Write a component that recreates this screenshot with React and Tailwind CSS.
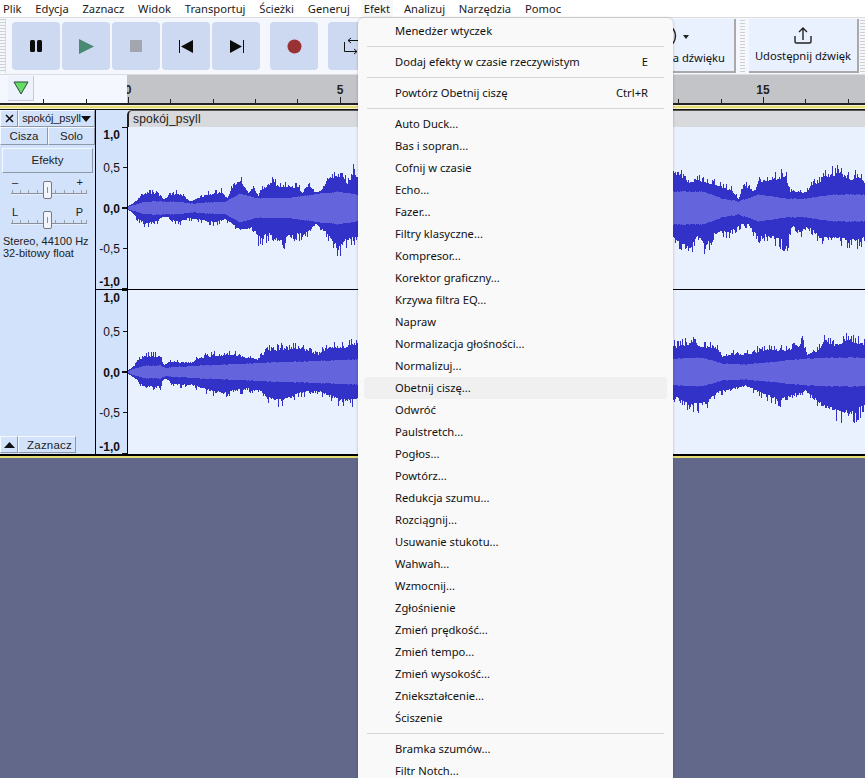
import { useMemo } from 'react';

const menuBar = ['Plik', 'Edycja', 'Zaznacz', 'Widok', 'Transportuj', 'Ścieżki', 'Generuj', 'Efekt', 'Analizuj', 'Narzędzia', 'Pomoc'];

const effects = [
  'Auto Duck...', 'Bas i sopran...', 'Cofnij w czasie', 'Echo...', 'Fazer...', 'Filtry klasyczne...', 'Kompresor...',
  'Korektor graficzny...', 'Krzywa filtra EQ...', 'Napraw', 'Normalizacja głośności...', 'Normalizuj...', 'Obetnij ciszę...',
  'Odwróć', 'Paulstretch...', 'Pogłos...', 'Powtórz...', 'Redukcja szumu...', 'Rozciągnij...', 'Usuwanie stukotu...',
  'Wahwah...', 'Wzmocnij...', 'Zgłośnienie', 'Zmień prędkość...', 'Zmień tempo...', 'Zmień wysokość...', 'Zniekształcenie...', 'Ściszenie',
];

// envelopes: [page x, amplitude in px], read off the reference
const channels = [
  {
    height: 162,
    center: 81,
    seed: 7,
    top: [[128, 1], [138, 11], [145, 18], [155, 18], [160, 13], [163, 8], [168, 15], [177, 18], [187, 11], [190, 6], [205, 16], [222, 20], [227, 10], [232, 25], [240, 33], [248, 16], [253, 25], [258, 13], [262, 23], [272, 30], [280, 26], [298, 25], [302, 16], [308, 28], [317, 13], [322, 21], [328, 35], [342, 40], [347, 28], [353, 43], [357, 30], [674, 40], [678, 43], [688, 28], [695, 33], [715, 28], [732, 21], [738, 10], [744, 28], [755, 18], [758, 31], [775, 36], [785, 41], [790, 20], [805, 17], [812, 28], [828, 40], [838, 43], [852, 35], [858, 40], [865, 28]],
    bottom: [[128, 1], [138, 14], [145, 20], [158, 15], [163, 7], [178, 18], [188, 12], [215, 18], [225, 13], [240, 25], [252, 23], [258, 37], [272, 32], [282, 42], [292, 32], [305, 32], [315, 17], [325, 27], [338, 50], [345, 40], [357, 35], [674, 35], [688, 50], [698, 32], [705, 49], [715, 29], [728, 30], [742, 20], [748, 19], [757, 35], [765, 32], [775, 37], [787, 44], [792, 19], [800, 30], [808, 22], [820, 37], [838, 37], [860, 41], [865, 35]],
    rms: [[128, 1], [145, 6], [175, 6], [190, 4], [225, 6], [240, 14], [258, 9], [290, 10], [338, 16], [357, 13], [674, 16], [702, 16], [722, 9], [738, 6], [758, 13], [788, 9], [805, 9], [832, 13], [865, 13]],
  },
  {
    height: 164,
    center: 82,
    seed: 23,
    top: [[128, 1], [133, 6], [137, 14], [143, 19], [160, 19], [163, 7], [170, 13], [190, 10], [200, 18], [213, 20], [230, 22], [257, 14], [268, 27], [300, 29], [317, 20], [328, 30], [345, 30], [353, 35], [357, 30], [674, 32], [675, 30], [692, 35], [698, 30], [715, 30], [722, 19], [732, 22], [745, 22], [765, 27], [772, 28], [788, 25], [802, 35], [807, 19], [818, 25], [825, 39], [835, 30], [847, 40], [865, 32]],
    bottom: [[128, 1], [133, 5], [143, 18], [160, 18], [163, 6], [173, 15], [193, 16], [213, 25], [227, 25], [247, 20], [260, 23], [270, 33], [283, 35], [300, 25], [317, 22], [337, 33], [353, 35], [357, 33], [674, 33], [675, 30], [688, 40], [698, 40], [708, 36], [715, 25], [732, 21], [745, 16], [765, 28], [778, 35], [805, 21], [822, 41], [840, 50], [853, 51], [865, 41]],
    rms: [[128, 1], [143, 6], [160, 6], [165, 4], [200, 6], [267, 9], [353, 12], [674, 13], [675, 13], [702, 14], [722, 8], [745, 7], [805, 13], [832, 14], [865, 14]],
  },
];

function sample(points, x) {
  for (let i = 1; i < points.length; i++) {
    if (x <= points[i][0]) {
      const [x0, y0] = points[i - 1];
      const [x1, y1] = points[i];
      return y0 + ((y1 - y0) * (x - x0)) / (x1 - x0 || 1);
    }
  }
  return points[points.length - 1][1];
}

function Waveform({ channel }) {
  const { height, center, seed, top, bottom, rms } = channel;
  const paths = useMemo(() => {
    let s = seed * 9973;
    const rand = () => {
      s = (s * 16807) % 2147483647;
      return s / 2147483647;
    };
    const peak = (r, p) => {
      const roll = rand();
      const v = roll < 0.2 ? 0.95 + rand() * 0.1 : 0.66 + 0.3 * rand() * rand();
      return Math.max(r + Math.min(3, r), r + (p - r) * v);
    };
    let dark = '';
    let light = '';
    for (let x = 128; x < 865; x++) {
      const r = sample(rms, x);
      const t = peak(r, sample(top, x));
      const b = peak(r, sample(bottom, x));
      const px = x - 128 + 0.5;
      dark += `M${px} ${Math.round(center - t)}V${Math.round(center + b)}`;
      const j = r + rand() * 0.8;
      light += `M${px} ${Math.round(center - j)}V${Math.round(center + j)}`;
    }
    return { dark, light };
  }, [seed, center, top, bottom, rms]);
  return (
    <svg width="737" height={height} className="block" shapeRendering="crispEdges">
      <path d={paths.dark} stroke="#3232c8" fill="none" />
      <path d={paths.light} stroke="#6464dc" fill="none" />
    </svg>
  );
}

function AmpRuler({ height, marks }) {
  return (
    <svg width="31" height={height} className="block shrink-0" fontFamily="'Liberation Sans', Arial, sans-serif" fontSize="12" fill="#111">
      {marks.map(([y, label, bold, ty]) => (
        <g key={label + y}>
          <text x="24" y={ty} textAnchor="end" fontWeight={bold ? 700 : 400}>{label}</text>
          <rect x={bold ? 26 : 27} y={y} width={bold ? 5 : 4} height={bold && label === '0,0' ? 2 : 1} fill="#111" />
        </g>
      ))}
    </svg>
  );
}

function TransportButton({ children }) {
  return <div className="w-12 h-12 shrink-0 rounded-[4px] bg-[#cdd9f0] flex items-center justify-center">{children}</div>;
}

function Grip({ className = '' }) {
  return <div className={`bg-[repeating-linear-gradient(to_bottom,#cfcfcf_0,#cfcfcf_1px,transparent_1px,transparent_3px)] ${className}`} />;
}

function TrackButton({ className = '', children }) {
  return (
    <div className={`flex items-center justify-center bg-[#d3e2fb] border border-t-[#f4f8ff] border-l-[#f4f8ff] border-r-[#8f98a8] border-b-[#8f98a8] ${className}`}>
      {children}
    </div>
  );
}

function Slider({ left, right }) {
  return (
    <div className="relative h-[30px] mx-[11px]">
      <div className="flex justify-between h-[12px] leading-[12px] text-[11px] text-[#222] px-[1px]">
        <span>{left}</span>
        <span>{right}</span>
      </div>
      <svg width="76" height="8" className="block mt-[1px]" shapeRendering="crispEdges">
        {[1, 9, 17, 26, 35, 44, 53, 62, 70, 75].map((x) => (
          <rect key={x} x={x} y="1" width="1" height="3" fill="#9aa0aa" />
        ))}
        <rect x="0" y="4" width="76" height="1" fill="#8b8f98" />
        <rect x="0" y="5" width="76" height="1" fill="#e8eefb" />
      </svg>
      <div className="absolute left-[32px] top-[5px] w-[9px] h-[18px] rounded-[2px] bg-[#f2f5fb] border border-[#77797f] flex items-center justify-center">
        <div className="w-[1.5px] h-[6px] bg-[#8a8f99]" />
      </div>
    </div>
  );
}

function MenuRow({ label, shortcut, active }) {
  return (
    <div className={`h-[22px] mx-[6px] pl-[31px] pr-[19px] flex items-center justify-between rounded-[4px] ${active ? 'bg-[#f0f0f0]' : ''}`}>
      <span>{label}</span>
      {shortcut && <span>{shortcut}</span>}
    </div>
  );
}

function MenuSeparator() {
  return <div className="h-px my-[4px] mx-[9px] bg-[#d6d6d6]" />;
}

export default function App() {
  const ticks = [];
  for (let i = 0; i <= 17; i++) ticks.push(i);

  return (
    <div className="relative w-[865px] h-[778px] overflow-hidden flex flex-col bg-[#62688a] text-[#111] font-['Liberation_Sans',Arial,sans-serif]">
      {/* menu bar */}
      <div className="h-[17px] shrink-0 bg-white flex items-center pl-[3px] font-['Noto_Sans',sans-serif] text-[11.2px] leading-[16px] text-[#1a1a1a]">
        {menuBar.map((m) => (
          <span key={m} className={`mr-[13.8px] ${m === 'Efekt' ? 'shadow-[0_0_0_3px_#f7f7f7] bg-[#f7f7f7]' : ''}`}>{m}</span>
        ))}
      </div>

      {/* toolbar */}
      <div className="h-[58px] shrink-0 bg-[#f4f7fe] border-t border-b border-[#dcdcdc] flex items-center">
        <Grip className="w-[6px] h-[54px] ml-0 mr-[6px] border-r border-[#d8d8d8]" />
        <div className="flex gap-[2px]">
          <TransportButton>
            <svg width="12" height="12"><rect width="5" height="12" rx="1.5" fill="#0b0b0b" /><rect x="7" width="5" height="12" rx="1.5" fill="#0b0b0b" /></svg>
          </TransportButton>
          <TransportButton>
            <svg width="15" height="15"><path d="M0 0L15 7.5L0 15Z" fill="#4a8a72" /></svg>
          </TransportButton>
          <TransportButton>
            <svg width="12" height="12"><rect width="12" height="12" fill="#a3a6af" /></svg>
          </TransportButton>
          <TransportButton>
            <svg width="15" height="13"><rect width="1" height="13" fill="#0b0b0b" /><path d="M2 6.5L14 0V13Z" fill="#0b0b0b" /></svg>
          </TransportButton>
          <TransportButton>
            <svg width="15" height="13"><path d="M1 0L13 6.5L1 13Z" fill="#0b0b0b" /><rect x="14" width="1" height="13" fill="#0b0b0b" /></svg>
          </TransportButton>
        </div>
        <div className="ml-[10px]">
          <TransportButton>
            <svg width="15" height="15"><circle cx="7.5" cy="7.5" r="7" fill="#993333" /></svg>
          </TransportButton>
        </div>
        <div className="ml-[10px]">
          <TransportButton>
            <svg width="20" height="18" fill="none" stroke="#111" strokeWidth="1"><path d="M18 3.5H6M9 1L6 3.5L9 6" /><path d="M2.5 5V14.5H15M12 12L15 14.5L12 17" /></svg>
          </TransportButton>
        </div>

        <div className="ml-auto w-[130px] h-[54px] bg-[#e9f1ff] border-r-2 border-b-2 border-[#a9a9a9] flex flex-col items-end font-['Noto_Sans',sans-serif] text-[11.2px]">
          <svg width="30" height="20" className="mt-[8px] mr-[36px]" fill="none">
            <path d="M5 1.5Q10 9 5 16.5" stroke="#222" strokeWidth="1.4" />
            <path d="M15 8H21L18 12Z" fill="#222" />
          </svg>
          <span className="mt-[3px] mr-[9px] whitespace-nowrap">Konfiguracja dźwięku</span>
        </div>
        <Grip className="w-[5px] h-[52px] mx-[4px]" />
        <div className="w-[110px] h-[54px] bg-[#e9f1ff] border-r-2 border-b-2 border-[#a9a9a9] flex flex-col items-center font-['Noto_Sans',sans-serif] text-[11.2px]">
          <svg width="20" height="20" className="mt-[7px]" fill="none" stroke="#222" strokeWidth="1.4">
            <path d="M10 2V14M6 6L10 2L14 6" />
            <path d="M2 10V15.5Q2 17 3.5 17H16.5Q18 17 18 15.5V10" />
          </svg>
          <span className="mt-[2px] whitespace-nowrap">Udostępnij dźwięk</span>
        </div>
        <Grip className="w-[5px] h-[52px] ml-[1px]" />
      </div>

      {/* timeline */}
      <div className="h-[28px] shrink-0 flex">
        <div className="w-[127px] shrink-0 bg-[#f4f7fe] relative flex items-start pl-[8px] pt-[1px]">
          <div className="w-[26px] h-[25px] bg-[#edf2fd] border-r border-b border-[#c6cad6] flex items-center justify-center">
            <svg width="16" height="14"><path d="M1 1H15L8 13Z" fill="#66dd66" stroke="#2e4a3a" strokeWidth="1" /></svg>
          </div>
          <svg width="127" height="28" className="absolute left-0 top-0" shapeRendering="crispEdges">
            <rect x="43" y="24" width="1" height="4" fill="#222" />
            <rect x="86" y="24" width="1" height="4" fill="#222" />
          </svg>
        </div>
        <svg width="738" height="28" className="block overflow-visible bg-[#c3c4c8]" fontFamily="'Liberation Sans', Arial, sans-serif" fontSize="12" fontWeight="700" fill="#222">
          {ticks.map((i) => {
            const x = Math.round(1 + i * 42.33);
            const major = i % 5 === 0;
            return <rect key={i} x={x} y={major ? 22 : 24} width="1" height={major ? 6 : 4} fill="#222" />;
          })}
          <text x="1" y="19" textAnchor="middle">0</text>
          <text x="213" y="19" textAnchor="middle">5</text>
          <text x="636" y="19" textAnchor="middle">15</text>
        </svg>
      </div>

      {/* track */}
      <div className="h-[2px] shrink-0 bg-[#222]" />
      <div className="h-[1px] shrink-0 bg-[#f5f2d8]" />
      <div className="h-[2px] shrink-0 bg-[#e5dc72]" />
      <div className="h-[1px] shrink-0 bg-[#f5f2d8]" />
      <div className="h-[1px] shrink-0 bg-[#111]" />
      <div className="h-[344px] shrink-0 flex bg-[#d3e2fb]">
        <div className="w-[95px] shrink-0 flex flex-col text-[11.5px] text-[#222]">
          <div className="h-[17px] flex shrink-0">
            <TrackButton className="w-[18px]">
              <svg width="9" height="9" stroke="#111" strokeWidth="1.6"><path d="M1 1L8 8M8 1L1 8" /></svg>
            </TrackButton>
            <TrackButton className="flex-1 justify-between pl-[2px] pr-[2px]">
              <span className="text-[11px] tracking-[-0.1px] whitespace-nowrap">spokój_psyll</span>
              <svg width="10" height="6" className="shrink-0"><path d="M0 0H10L5 6Z" fill="#111" /></svg>
            </TrackButton>
          </div>
          <div className="h-[18px] flex shrink-0">
            <TrackButton className="w-[48px] pt-[1px]">Cisza</TrackButton>
            <TrackButton className="flex-1 pt-[1px]">Solo</TrackButton>
          </div>
          <TrackButton className="h-[25px] mx-[2px] mt-[3px] shrink-0 bg-[#cdd9f0]">Efekty</TrackButton>
          <div className="mt-[3px]">
            <Slider left="–" right="+" />
          </div>
          <div>
            <Slider left="L" right="P" />
          </div>
          <div className="pl-[3px] mt-[-1px] text-[11px] leading-[12px] whitespace-nowrap text-[#222]">
            <div>Stereo, 44100 Hz</div>
            <div>32-bitowy float</div>
          </div>
          <div className="mt-auto flex h-[17px] mb-[1px]">
            <TrackButton className="w-[18px]">
              <svg width="11" height="6"><path d="M0 6H11L5.5 0Z" fill="#111" /></svg>
            </TrackButton>
            <TrackButton className="w-[58px] pl-[5px] pt-[2px] tracking-[0.2px]">Zaznacz</TrackButton>
          </div>
        </div>
        <div className="flex-1 flex flex-col border-l border-black">
          <div className="h-[17px] shrink-0 flex">
            <div className="w-[31px] shrink-0" />
            <div className="flex-1 bg-[#d8d9dc] border-l-2 border-t border-[#222] rounded-tl-[5px] pl-[4px] text-[12px] leading-[16px] tracking-[0.2px] text-[#222] border-t-[#555]">spokój_psyll</div>
          </div>
          <div className="flex border-b border-black h-[163px] shrink-0">
            <AmpRuler
              height={162}
              marks={[
                [0, '1,0', true, 12],
                [40, '0,5', false, 45],
                [80, '0,0', true, 86],
                [121, '-0,5', false, 126],
                [161, '-1,0', true, 159],
              ]}
            />
            <div className="border-l border-black bg-[#e9f1ff] flex-1 overflow-hidden">
              <Waveform channel={channels[0]} />
            </div>
          </div>
          <div className="flex flex-1">
            <AmpRuler
              height={164}
              marks={[
                [0, '1,0', true, 12],
                [41, '0,5', false, 46],
                [81, '0,0', true, 87],
                [122, '-0,5', false, 127],
                [163, '-1,0', true, 161],
              ]}
            />
            <div className="border-l border-black bg-[#e9f1ff] flex-1 overflow-hidden">
              <Waveform channel={channels[1]} />
            </div>
          </div>
        </div>
      </div>
      <div className="h-[2px] shrink-0 bg-black" />
      <div className="h-[2px] shrink-0 bg-[#e5dc72]" />
      <div className="flex-1 bg-[#62688a]" />

      {/* Efekt dropdown */}
      <div className="absolute left-[358px] top-[18px] w-[315px] h-[800px] bg-[#f9f9f9] rounded-[6px] shadow-[0_0_2px_1px_rgba(0,0,0,0.12)] pt-[2px] font-['Noto_Sans',sans-serif] text-[11.2px] text-[#111]">
        <MenuRow label="Menedżer wtyczek" />
        <MenuSeparator />
        <MenuRow label="Dodaj efekty w czasie rzeczywistym" shortcut="E" />
        <MenuSeparator />
        <MenuRow label="Powtórz Obetnij ciszę" shortcut="Ctrl+R" />
        <MenuSeparator />
        {effects.map((e) => (
          <MenuRow key={e} label={e} active={e === 'Obetnij ciszę...'} />
        ))}
        <MenuSeparator />
        <MenuRow label="Bramka szumów..." />
        <MenuRow label="Filtr Notch..." />
      </div>
    </div>
  );
}
